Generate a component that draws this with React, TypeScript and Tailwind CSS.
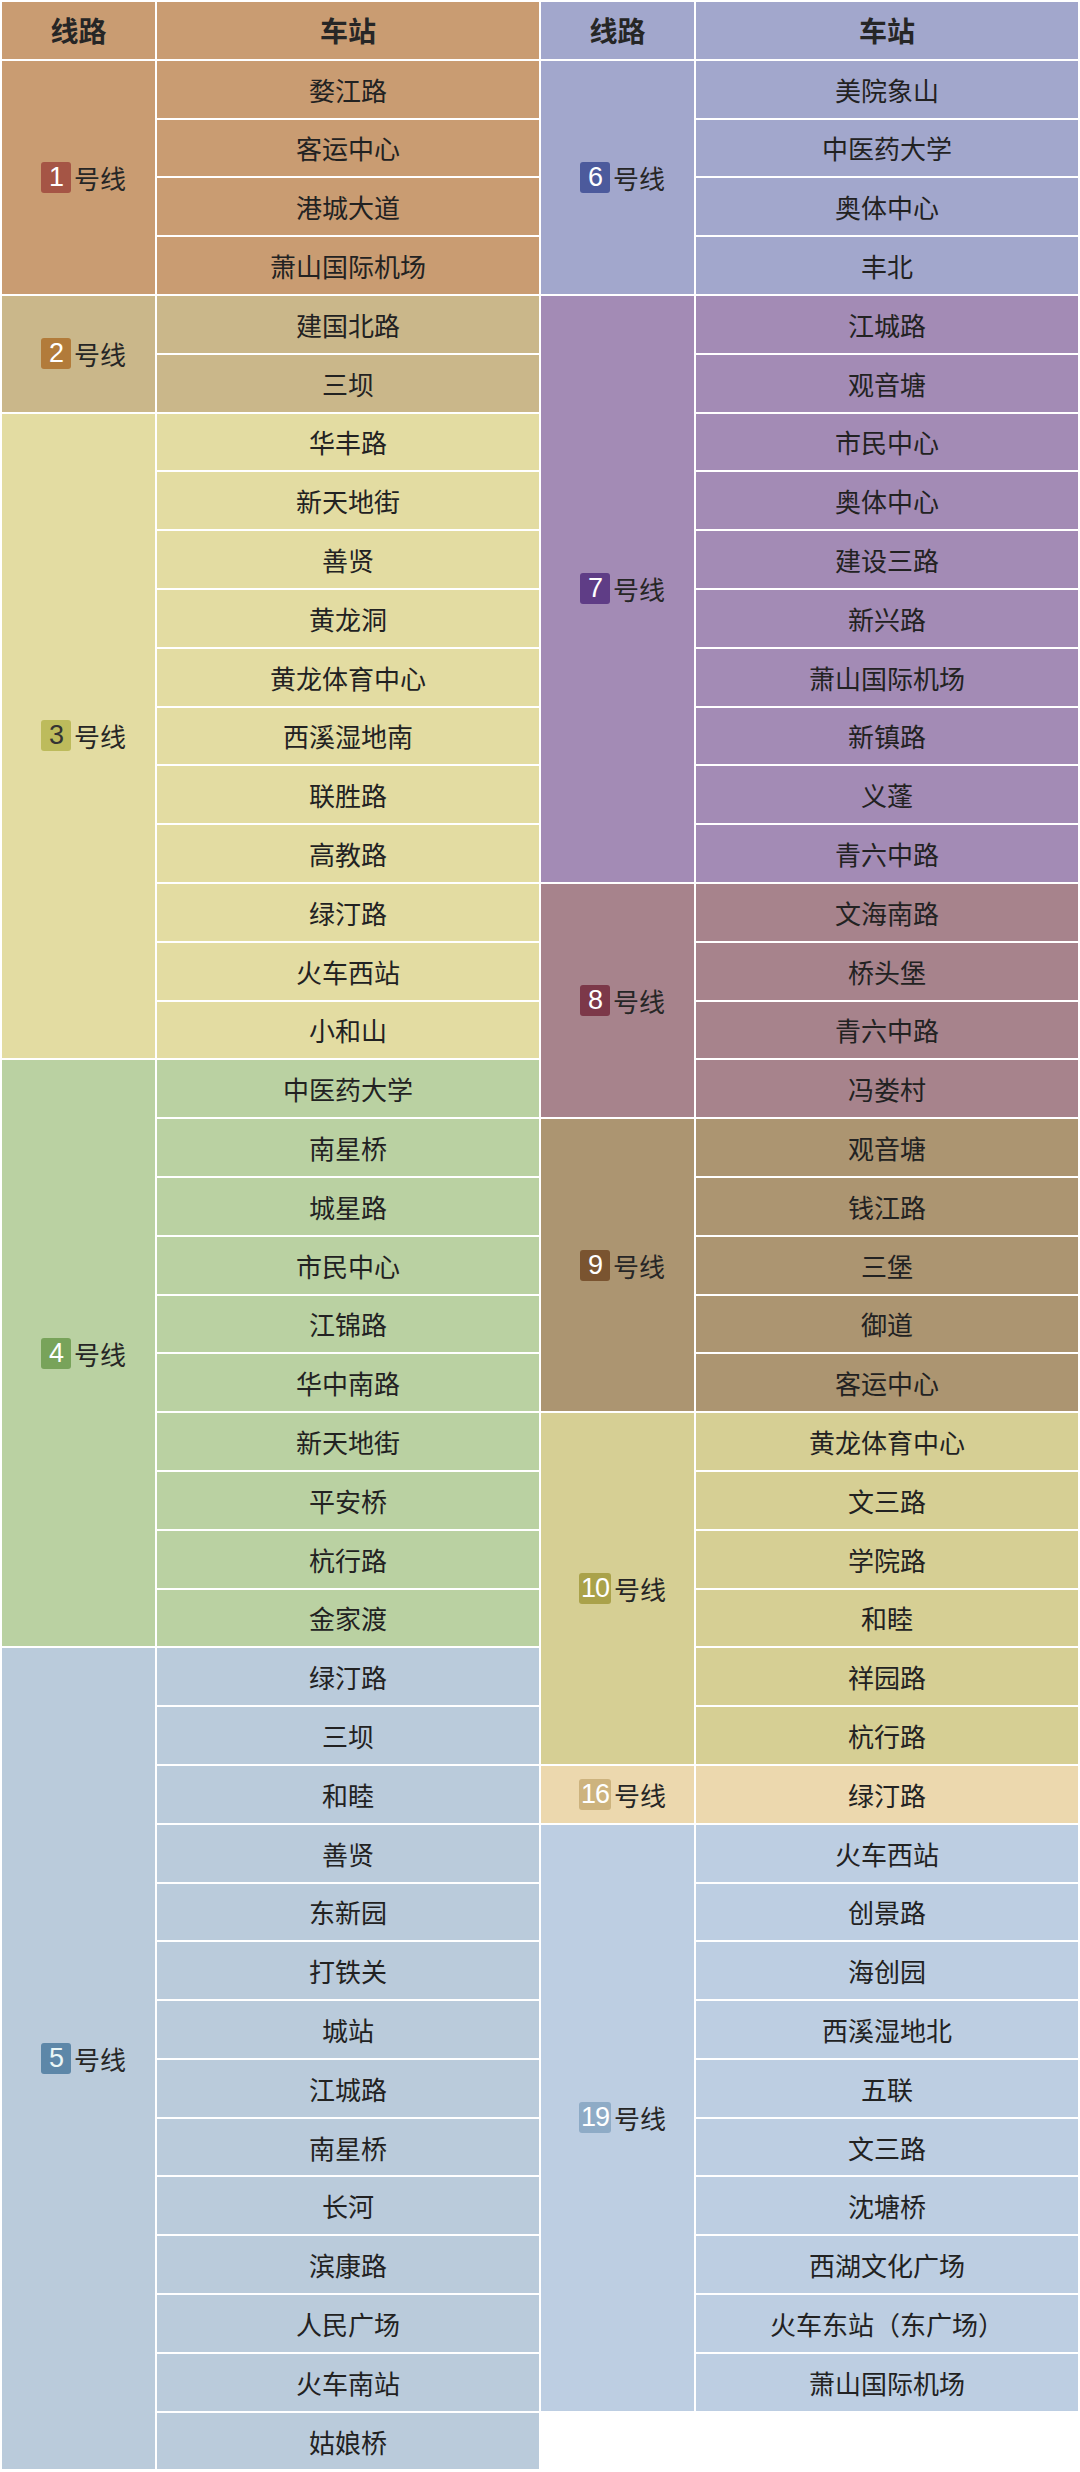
type Line = {
  num: string;
  bg: string;
  badge: string;
  digit: string;
  stations: string[];
};

const LEFT: Line[] = [
  {
    num: "1",
    bg: "bg-[#c99c72]",
    badge: "bg-[#a55545]",
    digit: "text-white",
    stations: ["婺江路", "客运中心", "港城大道", "萧山国际机场"],
  },
  {
    num: "2",
    bg: "bg-[#cab78a]",
    badge: "bg-[#b27b3a]",
    digit: "text-white",
    stations: ["建国北路", "三坝"],
  },
  {
    num: "3",
    bg: "bg-[#e3dca2]",
    badge: "bg-[#bdbb5c]",
    digit: "text-[#333333]",
    stations: [
      "华丰路",
      "新天地街",
      "善贤",
      "黄龙洞",
      "黄龙体育中心",
      "西溪湿地南",
      "联胜路",
      "高教路",
      "绿汀路",
      "火车西站",
      "小和山",
    ],
  },
  {
    num: "4",
    bg: "bg-[#bad1a2]",
    badge: "bg-[#78a35a]",
    digit: "text-white",
    stations: [
      "中医药大学",
      "南星桥",
      "城星路",
      "市民中心",
      "江锦路",
      "华中南路",
      "新天地街",
      "平安桥",
      "杭行路",
      "金家渡",
    ],
  },
  {
    num: "5",
    bg: "bg-[#bacbdb]",
    badge: "bg-[#5d87a8]",
    digit: "text-[#eaf6f6]",
    stations: [
      "绿汀路",
      "三坝",
      "和睦",
      "善贤",
      "东新园",
      "打铁关",
      "城站",
      "江城路",
      "南星桥",
      "长河",
      "滨康路",
      "人民广场",
      "火车南站",
      "姑娘桥",
    ],
  },
];

const RIGHT: Line[] = [
  {
    num: "6",
    bg: "bg-[#a2a7cc]",
    badge: "bg-[#4c5a9c]",
    digit: "text-white",
    stations: ["美院象山", "中医药大学", "奥体中心", "丰北"],
  },
  {
    num: "7",
    bg: "bg-[#a38bb5]",
    badge: "bg-[#5f3d86]",
    digit: "text-white",
    stations: [
      "江城路",
      "观音塘",
      "市民中心",
      "奥体中心",
      "建设三路",
      "新兴路",
      "萧山国际机场",
      "新镇路",
      "义蓬",
      "青六中路",
    ],
  },
  {
    num: "8",
    bg: "bg-[#a7838c]",
    badge: "bg-[#7c3849]",
    digit: "text-white",
    stations: ["文海南路", "桥头堡", "青六中路", "冯娄村"],
  },
  {
    num: "9",
    bg: "bg-[#ac9571]",
    badge: "bg-[#7a5430]",
    digit: "text-white",
    stations: ["观音塘", "钱江路", "三堡", "御道", "客运中心"],
  },
  {
    num: "10",
    bg: "bg-[#d6cf94]",
    badge: "bg-[#aaa24a]",
    digit: "text-white",
    stations: ["黄龙体育中心", "文三路", "学院路", "和睦", "祥园路", "杭行路"],
  },
  {
    num: "16",
    bg: "bg-[#ecd8ae]",
    badge: "bg-[#cdb37e]",
    digit: "text-white",
    stations: ["绿汀路"],
  },
  {
    num: "19",
    bg: "bg-[#bdcee2]",
    badge: "bg-[#8eabc6]",
    digit: "text-white",
    stations: [
      "火车西站",
      "创景路",
      "海创园",
      "西溪湿地北",
      "五联",
      "文三路",
      "沈塘桥",
      "西湖文化广场",
      "火车东站（东广场）",
      "萧山国际机场",
    ],
  },
];

function LineLabel({ line }: { line: Line }) {
  return (
    <div className="flex items-center pl-[10px]">
      <span
        className={`${line.badge} ${line.digit} flex h-[31px] min-w-[30px] items-center justify-center rounded-[3px] px-[2px] text-[27px] leading-none tracking-[-1px] font-['Liberation_Sans',sans-serif]`}
      >
        {line.num}
      </span>
      <span className="ml-[3px] text-[26px] text-[#262626]">号线</span>
    </div>
  );
}

function Table({ header, lines }: { header: string; lines: Line[] }) {
  return (
    <div className="flex w-[537px] flex-col gap-[2px]">
      <div className="flex gap-[2px]">
        <div
          className={`${header} flex h-[56.8px] w-[153px] items-center justify-center text-[28px] font-bold text-[#262626]`}
        >
          线路
        </div>
        <div
          className={`${header} flex h-[56.8px] flex-1 items-center justify-center text-[28px] font-bold text-[#262626]`}
        >
          车站
        </div>
      </div>
      {lines.map((line) => (
        <div key={line.num} className="flex gap-[2px]">
          <div
            className={`${line.bg} flex w-[153px] shrink-0 items-center justify-center`}
          >
            <LineLabel line={line} />
          </div>
          <div className="flex flex-1 flex-col gap-[2px]">
            {line.stations.map((s, i) => (
              <div
                key={i}
                className={`${line.bg} flex h-[56.8px] items-center justify-center text-[26px] text-[#222222]`}
              >
                {s}
              </div>
            ))}
          </div>
        </div>
      ))}
    </div>
  );
}

export default function App() {
  return (
    <div className="flex h-[2472px] w-[1080px] items-start gap-[2px] bg-white p-[2px] font-['Noto_Sans_CJK_SC','Noto_Sans',sans-serif]">
      <Table header="bg-[#c99c72]" lines={LEFT} />
      <Table header="bg-[#a2a7cc]" lines={RIGHT} />
    </div>
  );
}
